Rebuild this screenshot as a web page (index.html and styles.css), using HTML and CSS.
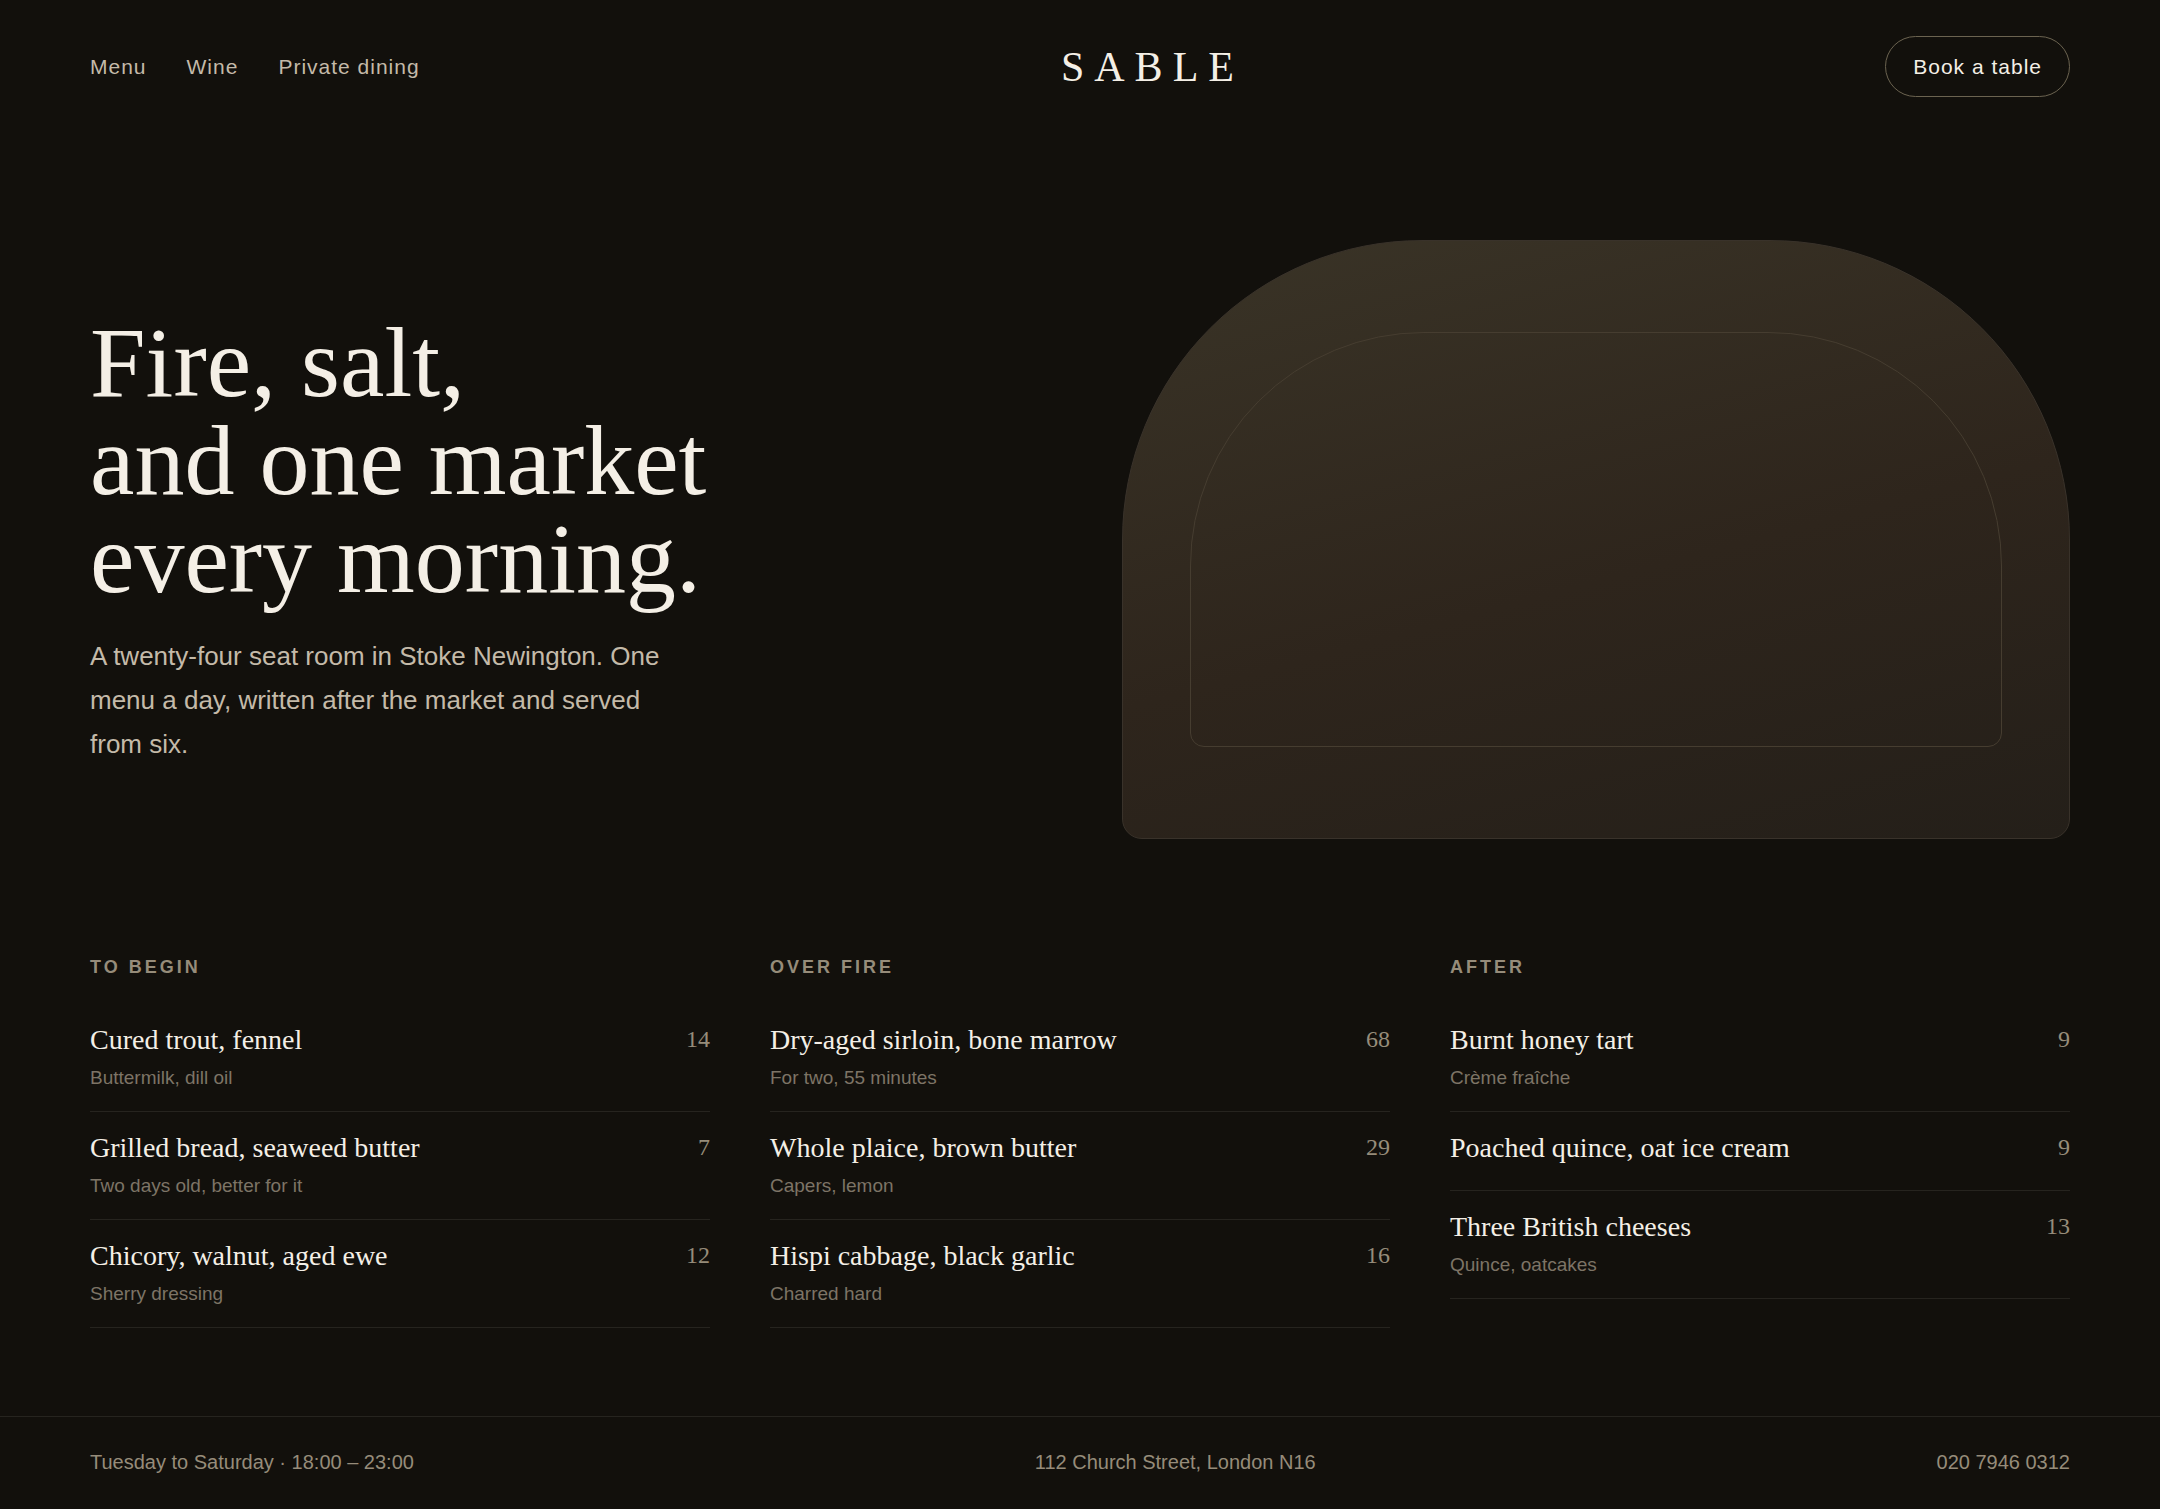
FILE: index.html
```html
<!DOCTYPE html>
<html lang="en">
<head>
  <meta charset="UTF-8">
  <meta name="viewport" content="width=device-width, initial-scale=1.0">
  <title>Sable</title>
  <link rel="stylesheet" href="styles.css">
</head>
<body>

  <header class="header">
    <nav class="nav">
      <a href="#menu">Menu</a>
      <a href="#wine">Wine</a>
      <a href="#private">Private dining</a>
    </nav>
    <a href="#" class="logo">SABLE</a>
    <button type="button" class="book">Book a table</button>
  </header>

  <main>
    <section class="hero">
      <div class="hero-text">
        <h1>Fire, salt,<br>and one market<br>every morning.</h1>
        <p>A twenty-four seat room in Stoke Newington. One menu a day, written after the market and served from six.</p>
      </div>
      <div class="arch">
        <div class="arch-inner"></div>
      </div>
    </section>

    <section class="menu" id="menu">
      <div class="course">
        <h2>To begin</h2>
        <ul>
          <li>
            <div>
              <h3>Cured trout, fennel</h3>
              <p>Buttermilk, dill oil</p>
            </div>
            <span class="price">14</span>
          </li>
          <li>
            <div>
              <h3>Grilled bread, seaweed butter</h3>
              <p>Two days old, better for it</p>
            </div>
            <span class="price">7</span>
          </li>
          <li>
            <div>
              <h3>Chicory, walnut, aged ewe</h3>
              <p>Sherry dressing</p>
            </div>
            <span class="price">12</span>
          </li>
        </ul>
      </div>

      <div class="course">
        <h2>Over fire</h2>
        <ul>
          <li>
            <div>
              <h3>Dry-aged sirloin, bone marrow</h3>
              <p>For two, 55 minutes</p>
            </div>
            <span class="price">68</span>
          </li>
          <li>
            <div>
              <h3>Whole plaice, brown butter</h3>
              <p>Capers, lemon</p>
            </div>
            <span class="price">29</span>
          </li>
          <li>
            <div>
              <h3>Hispi cabbage, black garlic</h3>
              <p>Charred hard</p>
            </div>
            <span class="price">16</span>
          </li>
        </ul>
      </div>

      <div class="course">
        <h2>After</h2>
        <ul>
          <li>
            <div>
              <h3>Burnt honey tart</h3>
              <p>Crème fraîche</p>
            </div>
            <span class="price">9</span>
          </li>
          <li>
            <div>
              <h3>Poached quince, oat ice cream</h3>
            </div>
            <span class="price">9</span>
          </li>
          <li>
            <div>
              <h3>Three British cheeses</h3>
              <p>Quince, oatcakes</p>
            </div>
            <span class="price">13</span>
          </li>
        </ul>
      </div>
    </section>
  </main>

  <footer class="footer">
    <span>Tuesday to Saturday · 18:00 – 23:00</span>
    <span>112 Church Street, London N16</span>
    <span>020 7946 0312</span>
  </footer>

</body>
</html>
```

FILE: styles.css
```css
* {
  box-sizing: border-box;
  margin: 0;
  padding: 0;
}

body {
  background: #12100c;
  color: #f4efe6;
  font-family: "Liberation Sans", Arial, sans-serif;
}

a {
  color: inherit;
  text-decoration: none;
}

.header {
  display: flex;
  justify-content: space-between;
  align-items: center;
  padding: 36px 90px;
}

.nav {
  display: flex;
  gap: 40px;
  font-size: 21px;
  letter-spacing: 1px;
  color: #c4baa9;
}

.logo {
  font-family: "Liberation Serif", serif;
  font-size: 42px;
  line-height: 48px;
  letter-spacing: 10px;
}

.book {
  padding: 0 27px;
  height: 61px;
  border: 1px solid #6b6350;
  border-radius: 31px;
  background: transparent;
  color: #f4efe6;
  font-family: inherit;
  font-size: 21px;
  letter-spacing: 1px;
  cursor: pointer;
}

.book:hover {
  border-color: #c4baa9;
}

.hero {
  display: grid;
  grid-template-columns: 1fr 1fr;
  gap: 84px;
  align-items: center;
  padding: 107px 90px 0;
}

.hero h1 {
  font-family: "Liberation Serif", serif;
  font-size: 100px;
  font-weight: normal;
  line-height: 98px;
}

.hero p {
  max-width: 600px;
  margin-top: 26px;
  font-size: 26px;
  line-height: 44px;
  color: #c4baa9;
}

.arch {
  display: flex;
  height: 599px;
  padding: 91px 67px;
  border: 1px solid #39322a;
  border-radius: 300px 300px 20px 20px;
  background: linear-gradient(165deg, #3a3427 0%, #2e251c 55%, #241f19 100%);
}

.arch-inner {
  flex: 1;
  border: 1px solid #463d30;
  border-radius: 234px 234px 14px 14px;
}

.menu {
  display: grid;
  grid-template-columns: repeat(3, 1fr);
  gap: 60px;
  padding: 116px 90px 88px;
}

.course h2 {
  margin-bottom: 25px;
  font-size: 18px;
  line-height: 24px;
  letter-spacing: 3px;
  text-transform: uppercase;
  color: #968c7a;
}

.course ul {
  list-style: none;
}

.course li {
  display: flex;
  justify-content: space-between;
  padding: 18px 0 24px;
  border-bottom: 1px solid #26241f;
}

.course h3 {
  font-family: "Liberation Serif", serif;
  font-size: 28px;
  font-weight: normal;
  line-height: 36px;
}

.course p {
  margin-top: 11px;
  font-size: 19px;
  line-height: 18px;
  color: #7d7466;
}

.price {
  font-family: "Liberation Serif", serif;
  font-size: 24px;
  line-height: 34px;
  color: #968c7a;
}

.footer {
  display: flex;
  justify-content: space-between;
  padding: 33px 90px;
  border-top: 1px solid #26241f;
  font-size: 20px;
  line-height: 24px;
  color: #968c7a;
}
```
